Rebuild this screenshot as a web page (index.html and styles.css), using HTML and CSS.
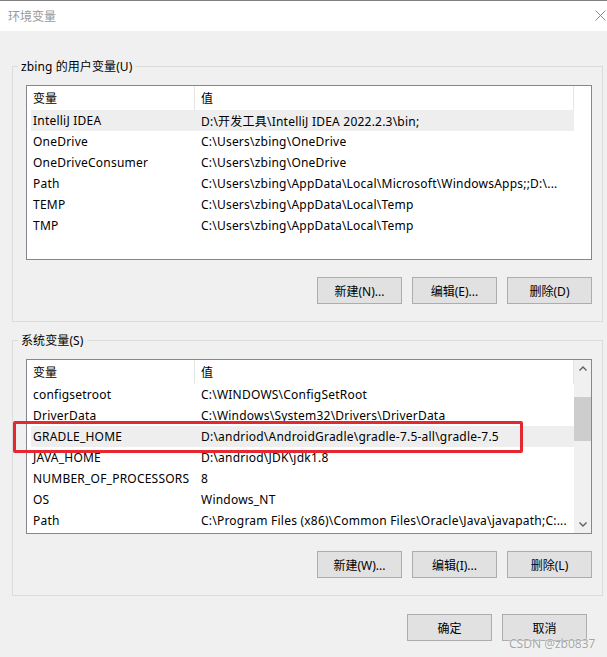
FILE: index.html
```html
<!DOCTYPE html>
<html lang="zh-CN">
<head>
<meta charset="utf-8">
<title>环境变量</title>
<link rel="stylesheet" href="styles.css">
</head>
<body>
<div class="window">
  <div class="titlebar">
    <span class="title">环境变量</span>
    <svg class="close" width="11" height="11" viewBox="0 0 11 11"><path d="M0.5 0.5 L10.5 10.5 M10.5 0.5 L0.5 10.5" stroke="#8a8a8a" stroke-width="1" fill="none"/></svg>
  </div>
  <div class="content">
    <fieldset class="group group-user">
      <legend>zbing 的用户变量(U)</legend>
      <div class="group-body">
        <div class="list">
          <div class="list-main">
            <div class="list-header"><div class="hcell hname">变量</div><div class="hcell hvalue">值</div></div>
            <div class="row selected"><div class="cname">IntelliJ IDEA</div><div class="cvalue">D:\开发工具\IntelliJ IDEA 2022.2.3\bin;</div></div>
            <div class="row"><div class="cname">OneDrive</div><div class="cvalue">C:\Users\zbing\OneDrive</div></div>
            <div class="row"><div class="cname">OneDriveConsumer</div><div class="cvalue">C:\Users\zbing\OneDrive</div></div>
            <div class="row"><div class="cname">Path</div><div class="cvalue">C:\Users\zbing\AppData\Local\Microsoft\WindowsApps;;D:\...</div></div>
            <div class="row"><div class="cname">TEMP</div><div class="cvalue">C:\Users\zbing\AppData\Local\Temp</div></div>
            <div class="row"><div class="cname">TMP</div><div class="cvalue">C:\Users\zbing\AppData\Local\Temp</div></div>
          </div>
          <div class="no-scroll"></div>
        </div>
        <div class="btn-row">
          <button class="btn">新建(N)...</button>
          <button class="btn">编辑(E)...</button>
          <button class="btn">删除(D)</button>
        </div>
      </div>
    </fieldset>

    <fieldset class="group group-sys">
      <legend>系统变量(S)</legend>
      <div class="group-body">
        <div class="list">
          <div class="list-main">
            <div class="list-header"><div class="hcell hname">变量</div><div class="hcell hvalue">值</div></div>
            <div class="row"><div class="cname">configsetroot</div><div class="cvalue">C:\WINDOWS\ConfigSetRoot</div></div>
            <div class="row"><div class="cname">DriverData</div><div class="cvalue">C:\Windows\System32\Drivers\DriverData</div></div>
            <div class="row selected"><div class="cname">GRADLE_HOME</div><div class="cvalue">D:\andriod\AndroidGradle\gradle-7.5-all\gradle-7.5</div></div>
            <div class="row"><div class="cname">JAVA_HOME</div><div class="cvalue">D:\andriod\JDK\jdk1.8</div></div>
            <div class="row"><div class="cname">NUMBER_OF_PROCESSORS</div><div class="cvalue">8</div></div>
            <div class="row"><div class="cname">OS</div><div class="cvalue">Windows_NT</div></div>
            <div class="row"><div class="cname">Path</div><div class="cvalue">C:\Program Files (x86)\Common Files\Oracle\Java\javapath;C:...</div></div>
          </div>
          <div class="scrollbar">
            <div class="sb-btn"><svg width="8" height="5" viewBox="0 0 8 5"><path d="M0.5 4.5 L4 1 L7.5 4.5" stroke="#606060" stroke-width="1.4" fill="none"/></svg></div>
            <div class="sb-track"><div class="sb-thumb"></div></div>
            <div class="sb-btn sb-down"><svg width="8" height="5" viewBox="0 0 8 5"><path d="M0.5 0.5 L4 4 L7.5 0.5" stroke="#606060" stroke-width="1.4" fill="none"/></svg></div>
          </div>
        </div>
        <div class="btn-row">
          <button class="btn">新建(W)...</button>
          <button class="btn">编辑(I)...</button>
          <button class="btn">删除(L)</button>
        </div>
      </div>
    </fieldset>

    <div class="dialog-buttons">
      <button class="btn">确定</button>
      <button class="btn">取消</button>
    </div>
  </div>
  <div class="highlight-box"></div>
  <div class="watermark">CSDN @zb0837</div>
</div>
</body>
</html>
```
FILE: styles.css
```css
* { box-sizing: border-box; }

body {
  margin: 0;
  background: #f0f0f0;
  font-family: "Noto Sans", "Noto Sans CJK SC", sans-serif;
  font-size: 12px;
  color: #000;
}

.window {
  position: relative;
  width: 607px;
  height: 657px;
  overflow: hidden;
  background: #f0f0f0;
}

.titlebar {
  height: 31px;
  background: #fff;
  border-top: 1px solid #808080;
  display: flex;
  align-items: center;
  justify-content: space-between;
  padding: 0 1px 1px 8px;
}

.title {
  color: #999;
  font-family: "Noto Sans CJK SC", sans-serif;
  font-size: 12px;
}

.content {
  padding: 0 4px 0 12px;
}

.group {
  margin: 0;
  padding: 0;
  border: 1px solid #dcdcdc;
  min-width: 0;
}

.group legend {
  margin-left: 5px;
  padding: 0 3px;
  line-height: 17px;
  font-family: "Noto Sans", "Noto Sans CJK SC", sans-serif;
  font-size: 12px;
  letter-spacing: 0.1px;
}

.group-user { margin-top: 27px; }
.group-sys { margin-top: 10px; }

.group-body {
  padding: 10px 10px 17px 13px;
}

.list {
  height: 175px;
  border: 1px solid #828790;
  background: #fff;
  display: flex;
}

.list-main {
  flex: 1;
  min-width: 0;
  padding-left: 4px;
}

.list-header {
  display: flex;
  height: 24px;
}

.hcell {
  display: flex;
  align-items: center;
  border-right: 1px solid #e5e5e5;
}

.hname {
  width: 164px;
  padding-left: 2px;
}

.hvalue {
  flex: 1;
  padding-left: 6px;
}

.row {
  display: flex;
  align-items: center;
  height: 21px;
  white-space: nowrap;
  letter-spacing: 0.22px;
}

.row.selected {
  background: #eeeeee;
}

.cname {
  width: 164px;
  padding-left: 2px;
  overflow: hidden;
}

.cvalue {
  flex: 1;
  padding-left: 6px;
  overflow: hidden;
}

.no-scroll {
  width: 17px;
}

.scrollbar {
  width: 17px;
  background: #f0f0f0;
  display: flex;
  flex-direction: column;
}

.sb-btn {
  height: 17px;
  display: flex;
  align-items: center;
  justify-content: center;
}

.sb-btn svg { display: block; }

.sb-track {
  flex: 1;
  padding-top: 20px;
}

.sb-thumb {
  height: 44px;
  background: #cdcdcd;
}

.btn-row {
  display: flex;
  justify-content: flex-end;
  gap: 10px;
  margin-top: 17px;
}

.btn {
  width: 85px;
  height: 27px;
  padding: 0;
  background: #e1e1e1;
  border: 1px solid #adadad;
  border-radius: 0;
  font-family: "Noto Sans", "Noto Sans CJK SC", sans-serif;
  font-size: 12px;
  color: #000;
}

.dialog-buttons {
  display: flex;
  justify-content: flex-end;
  gap: 10px;
  margin-top: 18px;
  padding-right: 16px;
}

.highlight-box {
  position: absolute;
  left: 13px;
  top: 421px;
  width: 510px;
  height: 32px;
  border: 3.5px solid #e52830;
  border-radius: 2px;
}

.watermark {
  position: absolute;
  left: 509px;
  top: 635px;
  font-family: "Noto Sans", sans-serif;
  font-size: 12px;
  color: #a5a5a5;
  text-shadow: 0 0 1px #fff, 0 0 1px #fff;
  white-space: nowrap;
}
```
